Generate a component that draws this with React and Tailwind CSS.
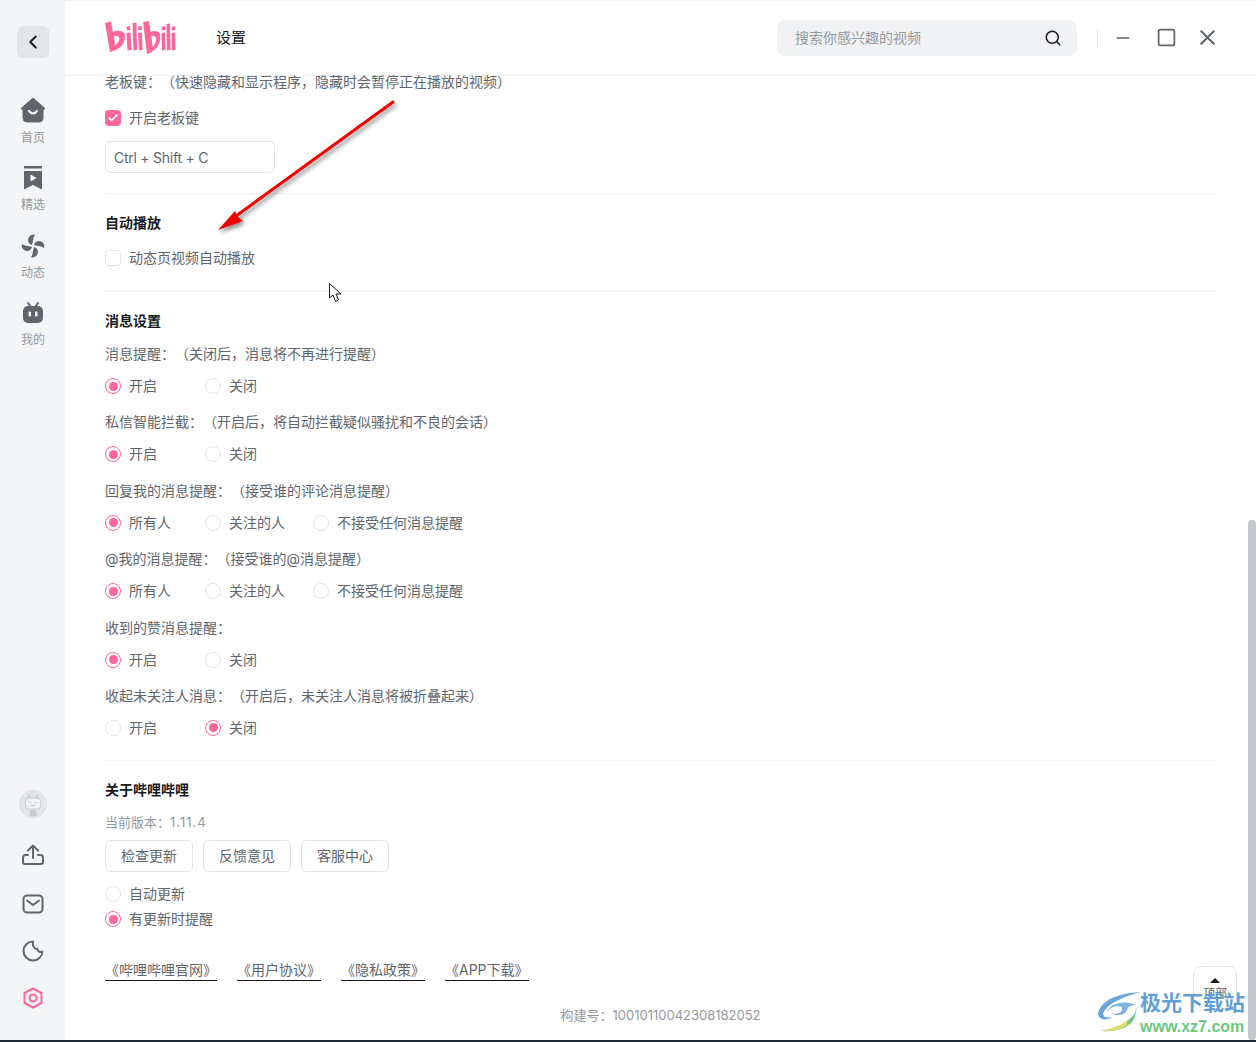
import { Search, Minus, Square, X, ChevronLeft, Check } from "lucide-react";

const navItems = [
  { label: "首页", icon: "home" },
  { label: "精选", icon: "pick" },
  { label: "动态", icon: "fan" },
  { label: "我的", icon: "tv" },
];

const messageSettings = [
  { title: "消息提醒：（关闭后，消息将不再进行提醒）", options: ["开启", "关闭"], active: 0 },
  { title: "私信智能拦截：（开启后，将自动拦截疑似骚扰和不良的会话）", options: ["开启", "关闭"], active: 0 },
  { title: "回复我的消息提醒：（接受谁的评论消息提醒）", options: ["所有人", "关注的人", "不接受任何消息提醒"], active: 0 },
  { title: "@我的消息提醒：（接受谁的@消息提醒）", options: ["所有人", "关注的人", "不接受任何消息提醒"], active: 0 },
  { title: "收到的赞消息提醒：", options: ["开启", "关闭"], active: 0 },
  { title: "收起未关注人消息：（开启后，未关注人消息将被折叠起来）", options: ["开启", "关闭"], active: 1 },
];

const links = ["《哔哩哔哩官网》", "《用户协议》", "《隐私政策》", "《APP下载》"];

const NavIcon = ({ name }) => {
  if (name === "home") {
    return (
      <svg width="26" height="26" viewBox="0 0 26 26">
        <path d="M13 1 L25 11.5 L23 13 L23 21 Q23 25 19 25 L7 25 Q3 25 3 21 L3 13 L1 11.5 Z" fill="#61666d" stroke="#61666d" strokeLinejoin="round" />
        <path d="M9 14 Q13 19 17 14" fill="none" stroke="#fff" strokeWidth="2.2" strokeLinecap="round" />
      </svg>
    );
  }
  if (name === "pick") {
    return (
      <svg width="20" height="24" viewBox="0 0 20 24">
        <rect x="1" y="0" width="18" height="2.5" fill="#61666d" />
        <path d="M1 5 H19 V23.5 L10 19 L1 23.5 Z" fill="#61666d" />
        <path d="M7.5 8.5 L13.5 12 L7.5 15.5 Z" fill="#fff" />
      </svg>
    );
  }
  if (name === "fan") {
    return (
      <svg width="24" height="24" viewBox="0 0 24 24" fill="#61666d">
        <path d="M11 11 C7 10 6 6 8 3 C9.500 1 12.500 0 14 1 C12 3 12.500 7 11 11 Z" />
        <path d="M13 11 C14 7 18 6 21 8 C23 9.500 24 12.500 23 14 C21 12 17 12.500 13 11 Z" />
        <path d="M13 13 C17 14 18 18 16 21 C14.500 23 11.500 24 10 23 C12 21 11.500 17 13 13 Z" />
        <path d="M11 13 C10 17 6 18 3 16 C1 14.500 0 11.500 1 10 C3 12 7 11.500 11 13 Z" />
      </svg>
    );
  }
  return (
    <svg width="22" height="22" viewBox="0 0 22 22">
      <path d="M6 1 L8.500 4.500 M16 1 L13.500 4.500" stroke="#61666d" strokeWidth="2" strokeLinecap="round" />
      <rect x="1" y="4" width="20" height="17" rx="5" fill="#61666d" />
      <rect x="6.500" y="9.500" width="2.500" height="5" rx="1.200" fill="#fff" />
      <rect x="13" y="9.500" width="2.500" height="5" rx="1.200" fill="#fff" />
    </svg>
  );
};

const BiliLogo = () => (
  <svg width="71" height="33" viewBox="0 0 71 33" fill="#ff6699">
    {/* b */}
    <path d="M0 2 L6 0.500 L8 11 C12 9 18 9.500 19.500 13 C21 17 19 24 14 27 C11 29 7 30.500 5 31 Z M9 15 L10 24.500 C12 23.500 14.500 20 14.500 17.500 C14 15 11 14.500 9 15 Z" fillRule="evenodd" />
    {/* ili */}
    <path d="M21.500 12 L25.500 11.500 L26.500 29 L22.500 29.500 Z M21.500 6 L25 5 L25.500 9 L22 9.500 Z" />
    <path d="M27.500 2 L31.500 1.500 L32 29 L28.500 29.500 Z" />
    <path d="M33 12 L37 11.500 L37.500 29 L34 29.500 Z M33 5.500 L36.500 5 L37 9 L33.500 9.500 Z" />
    {/* b */}
    <path d="M38 1 L44 0 L45.500 11 C49 9 54 10 55 13 C56 18 54 26 49 29 C47 31 44 32.500 42 33 Z M46.500 15 L47.500 26 C49.500 25 51.500 20 51 17 C50.500 15 48 14.500 46.500 15 Z" fillRule="evenodd" />
    {/* ili */}
    <path d="M56.500 12 L60 11.500 L60.500 29 L57 29.500 Z M56.500 6 L60 5 L60.500 9 L57 9.500 Z" />
    <path d="M61.500 3 L65 2.500 L65.500 29 L62 29.500 Z" />
    <path d="M66.500 12 L70 11.500 L70.500 29 L67 29.500 Z M66.500 6 L70 5 L70.500 9 L67 9.500 Z" />
  </svg>
);

const Radio = ({ label, checked }) => (
  <div className="flex items-center h-5 min-w-[100px] pr-7">
    <span className={`w-4 h-4 rounded-full border flex items-center justify-center mr-2 shrink-0 ${checked ? "border-[#ff6699]" : "border-[#e3e5e7]"}`}>
      {checked && <span className="w-[9px] h-[9px] rounded-full bg-[#ff6699]" />}
    </span>
    {label}
  </div>
);

const SectionTitle = ({ children, className }) => (
  <div className={`h-5 leading-5 font-bold text-[#18191c] ${className}`}>{children}</div>
);

const OutlineButton = ({ children }) => (
  <button className="w-[88px] h-8 rounded-md border border-[#e3e5e7] text-[#61666d]">{children}</button>
);

const App = () => {
  return (
    <div
      className="relative h-screen flex flex-col overflow-hidden bg-white text-sm text-[#61666d] [text-spacing-trim:space-all]"
      style={{ fontFamily: '"Inter", "Noto Sans CJK SC", sans-serif' }}
    >
      <div className="h-px bg-[#f1f2f3] shrink-0" />
      <div className="flex flex-1 min-h-0">
        {/* Sidebar */}
        <aside className="w-[65px] shrink-0 bg-[#f4f5f7] flex flex-col items-center pt-[25px] pb-[30px]">
          <button className="w-8 h-8 rounded-md bg-[#e3e5e7] flex items-center justify-center text-[#18191c]">
            <ChevronLeft size={22} strokeWidth={2} />
          </button>
          <div className="mt-[38px] flex flex-col gap-[16px] items-center">
            {navItems.map((item, i) => (
              <div key={item.label} className="flex flex-col items-center h-[51.300px] pl-px">
                <div className={`h-[28px] flex items-center justify-center ${i > 0 ? "translate-y-px" : ""}`}>
                  <NavIcon name={item.icon} />
                </div>
                <span className="text-xs leading-4 mt-[6px] text-[#9499a0]">{item.label}</span>
              </div>
            ))}
          </div>
          <div className="mt-auto flex flex-col items-center pl-px">
            <svg width="28" height="28" viewBox="0 0 28 28">
              <circle cx="14" cy="14" r="14" fill="#e3e5e7" />
              <path d="M9 5 L11 8 M19 5 L17 8" stroke="#c9ccd0" strokeWidth="1.500" />
              <rect x="6.500" y="8" width="15" height="11" rx="3" fill="#f1f2f3" stroke="#c9ccd0" />
              <path d="M10 12 L12 13 M18 12 L16 13 M12 15.500 H16" stroke="#c9ccd0" />
              <path d="M10 26 L11 20 H17 L18 26 Z" fill="#c9ccd0" />
            </svg>
            <svg className="mt-[25px]" width="24" height="24" viewBox="0 0 24 24" fill="none" stroke="#61666d" strokeWidth="2" strokeLinecap="round" strokeLinejoin="round">
              <path d="M12 15 V3 M7 7.500 L12 2.500 L17 7.500" />
              <path d="M7 12 H4.500 Q2 12 2 15 V19 Q2 21 4 21 H20 Q22 21 22 19 V15 Q22 12 19.500 12 H17" />
            </svg>
            <svg className="mt-[25px]" width="24" height="24" viewBox="0 0 24 24" fill="none" stroke="#61666d" strokeWidth="2" strokeLinecap="round" strokeLinejoin="round">
              <rect x="2.500" y="3.500" width="19" height="17" rx="3.500" />
              <path d="M6 8.500 L12 13 L18 8.500" />
            </svg>
            <svg className="mt-[23px]" width="24" height="24" viewBox="0 0 24 24" fill="none" stroke="#61666d" strokeWidth="2" strokeLinecap="round" strokeLinejoin="round">
              <path d="M12 2.500 A9.500 9.500 0 1 0 21.500 12.500 C19 14 16.500 12 16.500 10 C13.500 10 11 7 12 2.500 Z" />
            </svg>
            <svg className="mt-[23px]" width="24" height="24" viewBox="0 0 24 24" fill="none" stroke="#ff6699" strokeWidth="2" strokeLinejoin="round">
              <path d="M12 2.500 L20.500 7 V17 L12 21.500 L3.500 17 V7 Z" />
              <circle cx="12" cy="12" r="3.500" />
            </svg>
          </div>
        </aside>

        {/* Main */}
        <main className="flex-1 min-w-0 flex flex-col">
          <header className="h-[75px] shrink-0 border-b border-[#f1f2f3] flex items-center pl-10 pr-[36px] pb-px">
            <BiliLogo />
            <span className="ml-10 text-[15px] text-[#18191c]">设置</span>
            <div className="ml-auto w-[300px] h-9 rounded-lg bg-[#f1f2f3] flex items-center pl-[18px] pr-[15px] text-[#9499a0]">
              <span className="flex-1">搜索你感兴趣的视频</span>
              <Search size={18} strokeWidth={2} className="text-[#18191c]" />
            </div>
            <div className="ml-5 mr-[17px] w-px h-4 bg-[#e3e5e7]" />
            <Minus size={20} strokeWidth={2} className="text-[#61666d] -mx-0.5" />
            <Square size={21} strokeWidth={2} className="ml-[25px] text-[#61666d]" />
            <X size={25} strokeWidth={2} className="ml-[18px] text-[#61666d]" />
          </header>

          <div className="flex-1 min-h-0 pl-10 pr-10">
            <div className="h-3 leading-3">老板键：（快速隐藏和显示程序，隐藏时会暂停正在播放的视频）</div>
            <div className="flex items-center h-5 mt-[20px]">
              <span className="w-4 h-4 rounded-sm bg-[#ff6699] flex items-center justify-center mr-2">
                <Check size={12} strokeWidth={3.500} className="text-white" />
              </span>
              开启老板键
            </div>
            <div className="mt-[13px] w-[170px] h-8 rounded-md border border-[#e3e5e7] flex items-center pl-2 pt-[2px] tracking-[-0.25px]">Ctrl + Shift + C</div>
            <div className="mt-5 border-t border-[#f1f2f3]" />

            <SectionTitle className="mt-[19px]">自动播放</SectionTitle>
            <div className="flex items-center h-5 mt-[15px]">
              <span className="w-4 h-4 rounded-sm border border-[#e3e5e7] mr-2" />
              动态页视频自动播放
            </div>
            <div className="mt-[23px] border-t border-[#f1f2f3]" />

            <SectionTitle className="mt-[19px]">消息设置</SectionTitle>
            <div className="mt-[13px]">
              {messageSettings.map((group) => (
                <div key={group.title} className="h-[68.400px]">
                  <div className="h-5 leading-5">{group.title}</div>
                  <div className="flex mt-3">
                    {group.options.map((option, i) => (
                      <Radio key={option} label={option} checked={i === group.active} />
                    ))}
                  </div>
                </div>
              ))}
            </div>
            <div className="mt-[6px] border-t border-[#f1f2f3]" />

            <SectionTitle className="mt-[19px]">关于哔哩哔哩</SectionTitle>
            <div className="mt-[14px] h-4 leading-4 text-[13px] text-[#9499a0]">
              当前版本：<span className="tracking-[1px]">1.11.4</span>
            </div>
            <div className="mt-[10px] flex gap-[10px]">
              <OutlineButton>检查更新</OutlineButton>
              <OutlineButton>反馈意见</OutlineButton>
              <OutlineButton>客服中心</OutlineButton>
            </div>
            <div className="mt-3"><Radio label="自动更新" /></div>
            <div className="mt-[5px]"><Radio label="有更新时提醒" checked /></div>

            <div className="mt-[31px] flex gap-5">
              {links.map((link) => (
                <span key={link} className="h-5 leading-5 border-b border-[#18191c] box-content -mb-px">{link}</span>
              ))}
            </div>
            <div className="mt-[25px] h-5 leading-5 text-center text-[13px] text-[#9499a0]">构建号：10010110042308182052</div>
          </div>
        </main>
      </div>
      <div className="h-[2px] bg-[#1c2b36] shrink-0" />

      {/* Scrollbar */}
      <div className="absolute right-0 top-[520px] bottom-[2px] w-[8px] rounded-md bg-[#c4c7cc]" />

      {/* Back to top */}
      <div className="absolute left-[1193px] top-[966px] w-11 h-[44px] rounded-lg border border-[#e3e5e7] bg-white flex flex-col items-center pt-[11px] text-xs">
        <span className="w-0 h-0 border-x-[5px] border-x-transparent border-b-[5px] border-b-[#18191c]" />
        <span className="mt-[3px] leading-4">顶部</span>
      </div>

      {/* Annotation arrow */}
      <svg className="absolute left-0 top-0 pointer-events-none drop-shadow-[2px_3px_2px_rgba(0,0,0,0.45)]" width="420" height="250" viewBox="0 0 420 250">
        <path d="M393 102 L236 216" stroke="#f00000" strokeWidth="3" strokeLinecap="round" />
        <path d="M218 230 L235 211 L238 217 L243 221 Z" fill="#f00000" />
      </svg>

      {/* Mouse cursor */}
      <svg className="absolute left-[328px] top-[282px]" width="15" height="22" viewBox="0 0 15 22">
        <path d="M1.500 1.500 V16 L5 13 L7.500 19.500 L10.500 18 L8 12 H13 Z" fill="#fff" stroke="#18191c" strokeWidth="1" strokeLinejoin="round" />
      </svg>

      {/* Watermark */}
      <div className="absolute left-[1096px] top-[990px] flex items-start">
        <svg width="46" height="44" viewBox="0 0 46 44" fill="none">
          <path d="M45 2 C30 3 10 6 3 20 C-1 29 9 32 17 27 C10 29 4 26 9 20 C16 11 30 6 45 2 Z" fill="#6aa5dc" />
          <path d="M10 23 C14 15 28 14 26 20 C24 25 16 24 14 22 C17 26 28 27 31 20 C32 16 36 15 40 15 C30 10 14 12 10 23 Z" fill="#7fb3e0" />
          <path d="M40 15 C42 25 30 36 5 41 C20 42 36 38 39 26 C40 22 41 18 40 15 Z" fill="#6cc883" />
          <path d="M31 30 C25 36 15 39 5 41 C14 42 24 40 31 35 Z" fill="#e4dc6a" />
        </svg>
        <div className="flex flex-col -ml-[2px] items-start">
          <span className="text-[21px] leading-[26px] font-bold text-[#5f9fd8] whitespace-nowrap">极光下载站</span>
          <span className="mt-[3px] text-[16px] leading-[16px] font-semibold text-[#6cc883] whitespace-nowrap" style={{ fontFamily: '"Liberation Sans", sans-serif' }}>www.xz7.com</span>
        </div>
      </div>
    </div>
  );
};

export default App;
